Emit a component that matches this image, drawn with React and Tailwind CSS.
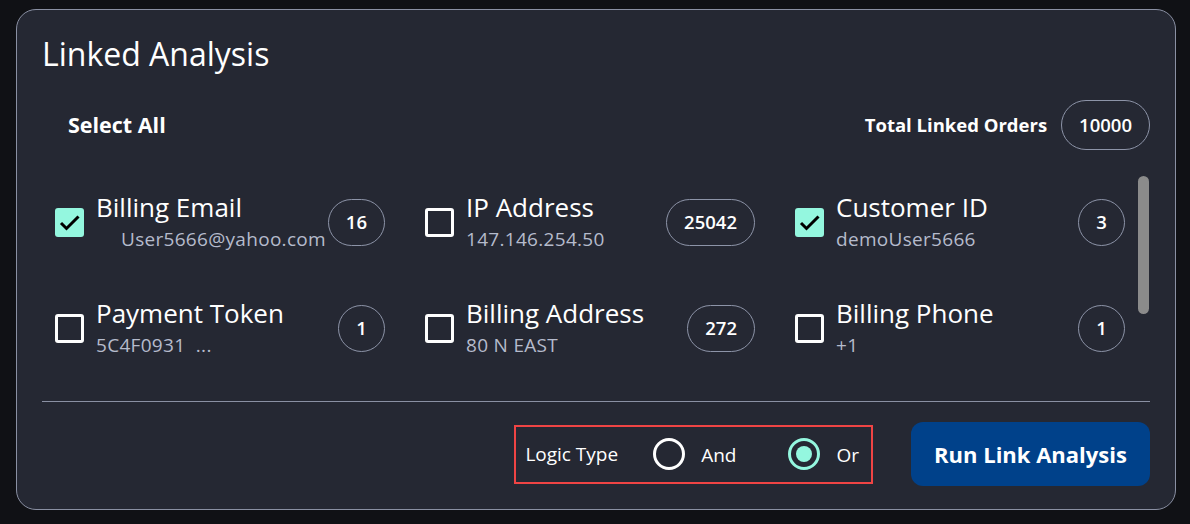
import React, { useState } from 'react';

const items = [
  { label: 'Billing Email', value: 'User5666@yahoo.com', count: '16', checked: true, indent: true },
  { label: 'IP Address', value: '147.146.254.50', count: '25042', checked: false },
  { label: 'Customer ID', value: 'demoUser5666', count: '3', checked: true },
  { label: 'Payment Token', value: '5C4F0931  ...', count: '1', checked: false },
  { label: 'Billing Address', value: '80 N EAST', count: '272', checked: false },
  { label: 'Billing Phone', value: '+1', count: '1', checked: false },
];

const CheckBox = ({ checked }) =>
  checked ? (
    <div className="w-[29px] h-[29px] shrink-0 rounded-[3px] bg-[#94f7df] flex items-center justify-center">
      <svg width="29" height="29" viewBox="0 0 29 29">
        <path d="M6 15 L11.5 20.5 L23.5 8.5" fill="none" stroke="#000" strokeWidth="3" />
      </svg>
    </div>
  ) : (
    <div className="w-[29px] h-[29px] shrink-0 rounded-[3px] border-[3px] border-white" />
  );

const CountPill = ({ children, tall = false }) => (
  <div
    className={`${tall ? 'h-[50px]' : 'h-[47px]'} min-w-[47px] px-[17px] rounded-full border border-[#8d94a8] flex items-center justify-center text-[18.5px] font-semibold text-white`}
  >
    {children}
  </div>
);

const Radio = ({ selected, label, onClick }) => (
  <button type="button" onClick={onClick} className="flex items-center gap-[16px]">
    {selected ? (
      <span className="w-[32px] h-[32px] rounded-full border-[3px] border-[#94f7df] flex items-center justify-center">
        <span className="w-[16px] h-[16px] rounded-full bg-[#94f7df]" />
      </span>
    ) : (
      <span className="w-[32px] h-[32px] rounded-full border-[3px] border-white" />
    )}
    <span className="text-[19px] text-white pt-[3px]">{label}</span>
  </button>
);

export default function App() {
  const [logic, setLogic] = useState('or');

  return (
    <div className="w-[1190px] h-[524px] bg-[#101115] pl-4 pt-[9px] font-['Open_Sans',sans-serif]">
      <div className="w-[1160px] h-[501px] bg-[#252833] border border-[#8a90a3] rounded-[20px] px-[25px] pt-[24px]">
        <h1 className="text-[32px] leading-[40px] text-white">Linked Analysis</h1>

        {/* header row */}
        <div className="mt-[26px] flex items-center justify-between">
          <span className="pl-[26px] text-[21.5px] font-bold text-white">Select All</span>
          <div className="flex items-center gap-[14px]">
            <span className="text-[18.5px] font-bold text-white">Total Linked Orders</span>
            <CountPill tall>10000</CountPill>
          </div>
        </div>

        {/* list */}
        <div className="mt-[26px] h-[205px] flex pl-[13px] pr-px overflow-hidden">
          <div className="flex-1 grid grid-cols-3 gap-x-[40px] gap-y-[46px] pt-[16px] content-start">
            {items.map((it) => (
              <div key={it.label} className="flex items-center h-[60px]">
                <CheckBox checked={it.checked} />
                <div className="ml-[12px] flex-1 min-w-0">
                  <div className="text-[26px] leading-[33px] text-white whitespace-nowrap">{it.label}</div>
                  <div
                    className={`mt-[2px] text-[19px] leading-[27px] tracking-[0.3px] text-[#b5bbcc] whitespace-pre ${it.indent ? 'pl-[25px]' : ''}`}
                  >
                    {it.value}
                  </div>
                </div>
                <CountPill>{it.count}</CountPill>
              </div>
            ))}
          </div>
          <div className="ml-[13px] w-[11px]">
            <div className="h-[138px] rounded-full bg-[#8b8b8b]" />
          </div>
        </div>

        <div className="mt-[20px] h-px bg-[#8a90a3]" />

        {/* footer */}
        <div className="mt-[20px] flex items-center justify-end gap-[38px]">
          <div className="h-[59px] border-2 border-[#f04444] pl-[9px] pr-[12px] flex items-center">
            <span className="text-[19px] text-white">Logic Type</span>
            <div className="ml-[35px]">
              <Radio selected={logic === 'and'} label="And" onClick={() => setLogic('and')} />
            </div>
            <div className="ml-[52px]">
              <Radio selected={logic === 'or'} label="Or" onClick={() => setLogic('or')} />
            </div>
          </div>
          <button
            type="button"
            className="w-[239px] h-[64px] rounded-[12px] bg-[#00418a] text-[22px] font-bold text-white"
          >
            Run Link Analysis
          </button>
        </div>
      </div>
    </div>
  );
}
